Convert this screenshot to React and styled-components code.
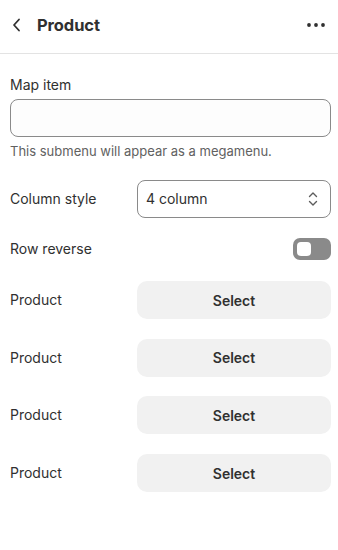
import React from 'react'
import styled, { createGlobalStyle } from 'styled-components'

const GlobalStyle = createGlobalStyle`
  body {
    margin: 0;
    background: #ffffff;
    font-family: Inter, "Noto Sans", sans-serif;
    color: #303030;
  }
`

const Panel = styled.div`
  width: 338px;
  min-height: 550px;
  background: #ffffff;
`

const Header = styled.div`
  height: 54px;
  box-sizing: border-box;
  display: flex;
  align-items: center;
  padding: 0 12px 4px 12px;
  border-bottom: 1px solid #e3e3e3;
`

const IconButton = styled.button`
  display: flex;
  align-items: center;
  justify-content: center;
  background: none;
  border: none;
  padding: 0;
  color: #303030;
  cursor: pointer;
`

const Title = styled.h1`
  flex: 1;
  margin: 0 0 0 15px;
  font-size: 16.5px;
  font-weight: 700;
  letter-spacing: -0.1px;
`

const Content = styled.div`
  display: flex;
  flex-direction: column;
  gap: 19.7px;
  padding: 21px 7px 0 10px;
`

const Field = styled.div`
  display: flex;
  flex-direction: column;
`

const Label = styled.label`
  font-size: 14px;
  line-height: 20px;
  color: #303030;
`

const TextInput = styled.input`
  margin-top: 4px;
  height: 38px;
  box-sizing: border-box;
  border: 1px solid #8a8a8a;
  border-radius: 8px;
  background: #fdfdfd;
  font: inherit;
  padding: 0 10px;
`

const Help = styled.span`
  margin-top: 5px;
  font-size: 13px;
  line-height: 18px;
  color: #616161;
`

const Row = styled.div`
  display: grid;
  grid-template-columns: 127px 1fr;
  align-items: center;
  min-height: ${({ $h }) => $h || 38}px;
`

const SelectBox = styled.div`
  height: 38px;
  box-sizing: border-box;
  border: 1px solid #8a8a8a;
  border-radius: 8px;
  display: flex;
  align-items: center;
  justify-content: space-between;
  padding: 0 12px 0 8px;
  font-size: 14px;
  color: #303030;
`

const ToggleTrack = styled.div`
  justify-self: end;
  width: 38px;
  height: 22px;
  border-radius: 7px;
  background: #8a8a8a;
  display: flex;
  align-items: center;
  padding: 0 4px;
  box-sizing: border-box;
`

const ToggleKnob = styled.div`
  width: 14px;
  height: 14px;
  border-radius: 4px;
  background: #ffffff;
`

const SelectButton = styled.button`
  height: 38px;
  border: none;
  border-radius: 10px;
  background: #f1f1f1;
  font-family: inherit;
  font-size: 14px;
  font-weight: 600;
  color: #303030;
  cursor: pointer;
`

const ChevronLeft = () => (
  <svg width="10" height="14" viewBox="0 0 10 14" fill="none">
    <path d="M7 1.5 2 7l5 5.5" stroke="#303030" strokeWidth="1.8" strokeLinecap="round" strokeLinejoin="round" />
  </svg>
)

const Dots = () => (
  <svg width="20" height="6" viewBox="0 0 20 6">
    <circle cx="3" cy="3" r="1.9" fill="#303030" />
    <circle cx="10" cy="3" r="1.9" fill="#303030" />
    <circle cx="17" cy="3" r="1.9" fill="#303030" />
  </svg>
)

const UpDown = () => (
  <svg width="10" height="16" viewBox="0 0 10 16" fill="none">
    <path d="M1.5 5.5 5 2l3.5 3.5M1.5 10.5 5 14l3.5-3.5" stroke="#5c5c5c" strokeWidth="1.4" strokeLinecap="round" strokeLinejoin="round" />
  </svg>
)

const products = [1, 2, 3, 4]

export default function App() {
  return (
    <Panel>
      <GlobalStyle />
      <Header>
        <IconButton><ChevronLeft /></IconButton>
        <Title>Product</Title>
        <IconButton><Dots /></IconButton>
      </Header>
      <Content>
        <Field>
          <Label>Map item</Label>
          <TextInput />
          <Help>This submenu will appear as a megamenu.</Help>
        </Field>
        <Row>
          <Label>Column style</Label>
          <SelectBox>
            <span>4 column</span>
            <UpDown />
          </SelectBox>
        </Row>
        <Row $h={24}>
          <Label>Row reverse</Label>
          <ToggleTrack>
            <ToggleKnob />
          </ToggleTrack>
        </Row>
        {products.map((p) => (
          <Row key={p}>
            <Label>Product</Label>
            <SelectButton>Select</SelectButton>
          </Row>
        ))}
      </Content>
    </Panel>
  )
}
